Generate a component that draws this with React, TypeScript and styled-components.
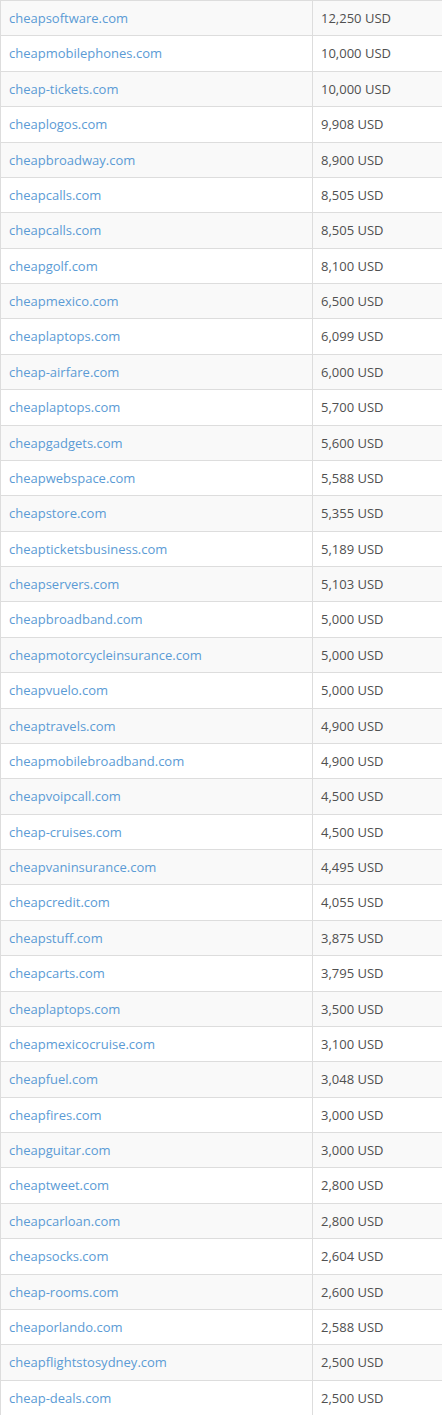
import React from "react";
import styled, { createGlobalStyle } from "styled-components";

const GlobalStyle = createGlobalStyle`
  html, body {
    margin: 0;
    padding: 0;
    background: #fff;
  }
  body {
    font-family: "Open Sans", "Liberation Sans", sans-serif;
    font-size: 13px;
    color: #505050;
  }
`;

const Table = styled.table`
  width: 442px;
  border-collapse: collapse;
  border-spacing: 0;
  border-left: 1px solid #ddd;
`;

const Row = styled.tr<{ $striped: boolean }>`
  background-color: ${(props) => (props.$striped ? "#f9f9f9" : "#fff")};
`;

const Cell = styled.td<{ $width?: number }>`
  width: ${(props) => (props.$width ? `${props.$width}px` : "auto")};
  padding: 8px 8px;
  line-height: 18.375px;
  border-top: 1px solid #ddd;
  border-right: 1px solid #ddd;
  vertical-align: top;
  white-space: nowrap;

  &:last-child {
    border-right: none;
  }
`;

const DomainLink = styled.a`
  color: #5b9bd5;
  text-decoration: none;
`;

const domains: [string, string][] = [
  ["cheapsoftware.com", "12,250 USD"],
  ["cheapmobilephones.com", "10,000 USD"],
  ["cheap-tickets.com", "10,000 USD"],
  ["cheaplogos.com", "9,908 USD"],
  ["cheapbroadway.com", "8,900 USD"],
  ["cheapcalls.com", "8,505 USD"],
  ["cheapcalls.com", "8,505 USD"],
  ["cheapgolf.com", "8,100 USD"],
  ["cheapmexico.com", "6,500 USD"],
  ["cheaplaptops.com", "6,099 USD"],
  ["cheap-airfare.com", "6,000 USD"],
  ["cheaplaptops.com", "5,700 USD"],
  ["cheapgadgets.com", "5,600 USD"],
  ["cheapwebspace.com", "5,588 USD"],
  ["cheapstore.com", "5,355 USD"],
  ["cheapticketsbusiness.com", "5,189 USD"],
  ["cheapservers.com", "5,103 USD"],
  ["cheapbroadband.com", "5,000 USD"],
  ["cheapmotorcycleinsurance.com", "5,000 USD"],
  ["cheapvuelo.com", "5,000 USD"],
  ["cheaptravels.com", "4,900 USD"],
  ["cheapmobilebroadband.com", "4,900 USD"],
  ["cheapvoipcall.com", "4,500 USD"],
  ["cheap-cruises.com", "4,500 USD"],
  ["cheapvaninsurance.com", "4,495 USD"],
  ["cheapcredit.com", "4,055 USD"],
  ["cheapstuff.com", "3,875 USD"],
  ["cheapcarts.com", "3,795 USD"],
  ["cheaplaptops.com", "3,500 USD"],
  ["cheapmexicocruise.com", "3,100 USD"],
  ["cheapfuel.com", "3,048 USD"],
  ["cheapfires.com", "3,000 USD"],
  ["cheapguitar.com", "3,000 USD"],
  ["cheaptweet.com", "2,800 USD"],
  ["cheapcarloan.com", "2,800 USD"],
  ["cheapsocks.com", "2,604 USD"],
  ["cheap-rooms.com", "2,600 USD"],
  ["cheaporlando.com", "2,588 USD"],
  ["cheapflightstosydney.com", "2,500 USD"],
  ["cheap-deals.com", "2,500 USD"],
];

const App = () => {
  return (
    <>
      <GlobalStyle />
      <Table>
        <tbody>
          {domains.map(([name, price], i) => (
            <Row key={i} $striped={i % 2 === 0}>
              <Cell $width={295}>
                <DomainLink href="#">{name}</DomainLink>
              </Cell>
              <Cell>{price}</Cell>
            </Row>
          ))}
        </tbody>
      </Table>
    </>
  );
};

export default App;
